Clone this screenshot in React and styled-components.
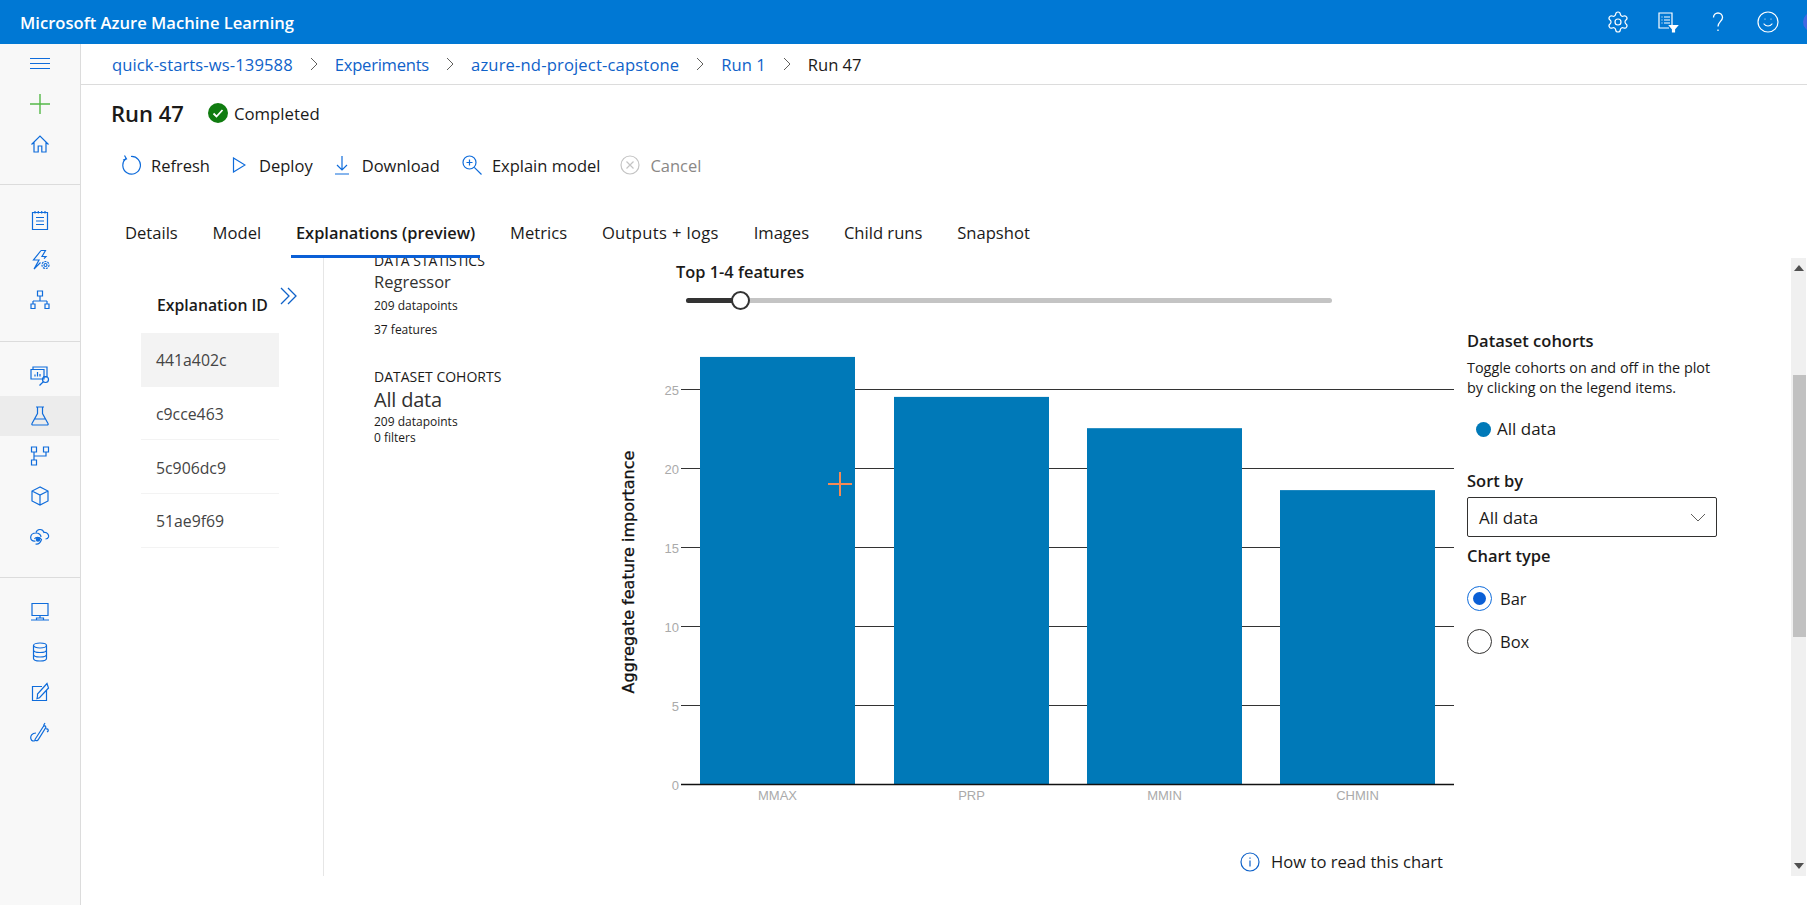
import React from "react";
import styled, { createGlobalStyle } from "styled-components";
import { Settings, Smile } from "lucide-react";

const GlobalStyle = createGlobalStyle`
  html, body {
    margin: 0;
    padding: 0;
    height: 100%;
    overflow: hidden;
    background: #fff;
    font-family: "Open Sans", "Noto Sans", sans-serif;
    color: #1b1a19;
  }
  * { box-sizing: border-box; }
`;

const Page = styled.div`
  display: flex;
  flex-direction: column;
  height: 905px;
`;

/* top bar */
const TopBar = styled.header`
  flex: 0 0 44px;
  display: flex;
  align-items: center;
  background: #0078d4;
  color: #fff;
  padding-left: 20px;
  overflow: hidden;
`;

const Brand = styled.div`
  flex: 1;
  min-width: 0;
  font-size: 16.6px;
  font-weight: 600;
`;

const TopIcons = styled.div`
  flex-shrink: 0;
  display: flex;
  align-items: center;
  gap: 26px;
  margin-right: -16px;
`;

const Avatar = styled.div`
  width: 20px;
  height: 20px;
  margin-left: -3px;
  border-radius: 50%;
  background: #4169e1;
`;

const Body = styled.div`
  flex: 1;
  display: flex;
  min-height: 0;
`;

/* left rail */
const Rail = styled.nav`
  flex: 0 0 81px;
  background: #f8f8f8;
  border-right: 1px solid #dcdcdc;
`;

const RailGroup = styled.div`
  padding: ${(p) => p.$top}px 0 ${(p) => p.$bottom}px;
  border-bottom: ${(p) => (p.$last ? "none" : "1px solid #dcdcdc")};
`;

const RailItem = styled.div`
  height: 40px;
  display: flex;
  align-items: center;
  justify-content: center;
  color: ${(p) => p.$color || "#0f6cdb"};
  background: ${(p) => (p.$active ? "#ececec" : "transparent")};
`;

/* main column */
const Main = styled.main`
  flex: 1;
  min-width: 0;
  display: flex;
  flex-direction: column;
`;

const Breadcrumb = styled.div`
  flex: 0 0 41px;
  display: flex;
  align-items: center;
  gap: 17px;
  padding-left: 31px;
  border-bottom: 1px solid #dcdcdc;
  font-size: 16.6px;
`;

const Crumb = styled.span`
  color: ${(p) => (p.$current ? "#1b1a19" : "#0f62c9")};
  letter-spacing: ${(p) => p.$track || 0}px;
`;

const TitleRow = styled.div`
  flex: 0 0 56px;
  display: flex;
  align-items: center;
  padding-left: 30px;
`;

const RunTitle = styled.h1`
  margin: 0 24px 0 0;
  font-size: 22px;
  font-weight: 600;
`;

const Status = styled.div`
  display: flex;
  align-items: center;
  gap: 6px;
  font-size: 16.8px;
`;

const Toolbar = styled.div`
  flex: 0 0 48px;
  display: flex;
  align-items: center;
  gap: 22px;
  padding-left: 40px;
`;

const ToolButton = styled.div`
  display: flex;
  align-items: center;
  gap: ${(p) => p.$gap || 11}px;
  margin-left: ${(p) => p.$shift || 0}px;
  font-size: 16.5px;
  color: ${(p) => (p.$disabled ? "#8a8886" : "#1b1a19")};
`;

const ToolIcon = styled.span`
  display: flex;
  color: ${(p) => (p.$muted ? "#c4c4c4" : "#0f6cdb")};
`;

const Tabs = styled.div`
  flex: 0 0 69px;
  display: flex;
  align-items: stretch;
  gap: 24.8px;
  padding: 29px 0 0 39px;
`;

const Tab = styled.div`
  display: flex;
  align-items: center;
  padding: 0 5px 8px;
  font-size: ${(p) => (p.$active ? 16.4 : 16.6)}px;
  letter-spacing: ${(p) => p.$track || 0}px;
  font-weight: ${(p) => (p.$active ? 600 : 400)};
  border-bottom: 3px solid ${(p) => (p.$active ? "#0a5fd6" : "transparent")};
`;

const Content = styled.section`
  flex: 0 0 618px;
  display: flex;
  overflow: hidden;
`;

/* explanation list */
const ListPane = styled.div`
  flex: 0 0 243px;
  padding-left: 60px;
  border-right: 1px solid #e6e6e6;
`;

const ListHeader = styled.div`
  height: 75px;
  display: flex;
  align-items: flex-start;
  font-size: 15.8px;
  font-weight: 600;
`;

const ListTitle = styled.span`
  margin: 36px 0 0 16px;
  width: 123px;
  white-space: nowrap;
`;

const Expander = styled.span`
  margin-top: 29px;
  color: #0f62c9;
`;

const ListRow = styled.div`
  width: 138px;
  height: 53.7px;
  display: flex;
  align-items: center;
  padding: 2px 0 0 15px;
  font-size: 15.8px;
  color: #444;
  background: ${(p) => (p.$active ? "#f3f3f3" : "transparent")};
  border-bottom: 1px solid #f3f3f3;
`;

/* stats column */
const StatsPane = styled.div`
  flex: 0 0 286px;
  padding: 0 0 0 50px;
  margin-top: -6px;
`;

const StatsLabel = styled.div`
  font-size: 14px;
  line-height: 18px;
  margin-top: ${(p) => p.$top || 0}px;
`;

const StatsValue = styled.div`
  font-size: ${(p) => p.$size}px;
  line-height: ${(p) => p.$line}px;
  letter-spacing: ${(p) => p.$track || 0}px;
  color: #323130;
`;

const StatsSmall = styled.div`
  font-size: 12px;
  line-height: ${(p) => p.$line}px;
`;

/* chart column */
const ChartPane = styled.div`
  flex: 0 0 858px;
  display: flex;
  flex-direction: column;
`;

const SliderTitle = styled.div`
  margin: 4px 0 0 66px;
  font-size: 16.4px;
  line-height: 20px;
  font-weight: 600;
`;

const SliderTrack = styled.div`
  position: relative;
  width: 646px;
  height: 5px;
  margin: 16px 0 0 76px;
  border-radius: 3px;
  background: #c4c4c4;
`;

const SliderFill = styled.div`
  height: 100%;
  border-radius: 3px;
  background: #333;
`;

const SliderThumb = styled.div`
  position: absolute;
  top: -7px;
  width: 19px;
  height: 19px;
  margin-left: -9px;
  border-radius: 50%;
  background: #fff;
  border: 2px solid #333;
`;

const ChartSvg = styled.svg`
  display: block;
  margin-top: 37px;
`;

const HowTo = styled.div`
  display: flex;
  align-items: center;
  justify-content: flex-end;
  gap: 11px;
  margin: 40px 25px 0 0;
  font-size: 16.6px;
  color: #0f62c9;
`;

const HowToText = styled.span`
  color: #1b1a19;
`;

/* right options */
const OptionsPane = styled.div`
  flex: 0 0 324px;
  padding-top: 72px;
  margin-left: -1px;
`;

const OptionHeading = styled.div`
  font-size: 16.5px;
  line-height: 22px;
  font-weight: 600;
`;

const OptionHint = styled.div`
  width: 260px;
  margin-top: 6px;
  font-size: 14.4px;
  line-height: 20px;
`;

const LegendItem = styled.div`
  display: flex;
  align-items: center;
  gap: 6px;
  margin: 20px 0 30px 9px;
  font-size: 17px;
  line-height: 22px;
`;

const LegendDot = styled.span`
  width: 15px;
  height: 15px;
  border-radius: 50%;
  background: #0079b8;
`;

const Select = styled.div`
  width: 250px;
  height: 40px;
  display: flex;
  align-items: center;
  justify-content: space-between;
  margin: 5px 0 8px 0;
  padding: 0 10px 0 11px;
  border: 1px solid #323130;
  border-radius: 2px;
  font-size: 17px;
  color: #605e5c;
`;

const SelectValue = styled.span`
  color: #1b1a19;
`;

const RadioRow = styled.div`
  display: flex;
  align-items: center;
  gap: 8px;
  height: 25px;
  margin-top: ${(p) => p.$top}px;
  font-size: 16.5px;
`;

const RadioMark = styled.span`
  width: 25px;
  height: 25px;
  display: flex;
  align-items: center;
  justify-content: center;
  border-radius: 50%;
  border: 1px solid ${(p) => (p.$on ? "#0f6cdb" : "#323130")};
  &::after {
    content: "";
    width: 13px;
    height: 13px;
    border-radius: 50%;
    background: ${(p) => (p.$on ? "#0a5fd6" : "transparent")};
  }
`;

/* fake scrollbar, part of the screenshot */
const ScrollBar = styled.div`
  flex: 0 0 15px;
  display: flex;
  flex-direction: column;
  justify-content: space-between;
  align-items: center;
  position: relative;
  background: #f0f0f0;
  padding: 7px 0;
`;

const ScrollArrow = styled.span`
  width: 0;
  height: 0;
  border-left: 5px solid transparent;
  border-right: 5px solid transparent;
  ${(p) => (p.$down ? "border-top: 6px solid #505050;" : "border-bottom: 6px solid #505050;")}
`;

const ScrollThumb = styled.div`
  position: absolute;
  top: 117px;
  left: 2px;
  right: 0;
  height: 262px;
  background: #c1c1c1;
`;

/* drawings */
const Glyph = ({ size = 20, w = 1.2, children, ...rest }) => (
  <svg width={size} height={size} viewBox="0 0 20 20" fill="none" stroke="currentColor" strokeWidth={w} {...rest}>
    {children}
  </svg>
);

const railIcons = {
  menu: <path d="M0 4.5h20M0 9.5h20M0 14.5h20" />,
  plus: <path d="M10 0v20M0 10h20" strokeWidth="1.4" />,
  home: <path d="M1.5 10.5 10 2l8.5 8.5M4 8.5v9.5h4.2v-6h3.6v6H16V8.500" />,
  notebook: <path d="M2.500 2.500h15v17h-15zM5 1v2.500M8.300 1v2.500M11.700 1v2.500M15 1v2.500M6 7.500h8M6 11h8M6 14.500h8" />,
  automl: (
    <>
      <path d="M11 .5 3.500 10H9l-5 9 6.500-6.500" />
      <path d="M11 .5h4.500L12 6.500h4l-2 2.200" />
      <circle cx="15.500" cy="15" r="1.500" />
      <circle cx="15.500" cy="15" r="3.500" strokeDasharray="2 1" />
    </>
  ),
  designer: <path d="M7.500 1h5v5h-5zM10 6v5M3 11h14M3 11v3M17 11v3M1 14h4v4.500H1zM15 14h4v4.500h-4z" />,
  dashboard: (
    <>
      <path d="M3 3.500V1h14v10h-4M1 3.500h13v9.500H1z" />
      <path d="M5 10.500V8.500M7.500 10.500V6M10 10.500V8" />
      <circle cx="15.500" cy="13.500" r="3" />
      <path d="M13.300 15.800 9.500 19.500" />
    </>
  ),
  flask: <path d="M6 1h8M7.500 1v6.500L2 17.500c-.5 1 0 1.500 1 1.500h14c1 0 1.500-.5 1-1.500L12.500 7.500V1M5 13h10" />,
  pipeline: <path d="M1.500 1h5v5h-5zM13.500 1h5v5h-5zM1.500 14h5v5h-5zM4 6v8M16 6v4H4" />,
  cube: <path d="M10 1 2 5v10l8 4 8-4V5zM2 5l8 4 8-4M10 9v10" />,
  cloud: (
    <>
      <path d="M6 6.500C7 3 12.500 2 14 6.500c3.500-.5 5 2.500 4.500 4.500-.5 1.500-1.500 2-3 2M5.500 15c-3 .5-5-1-4.800-4C1 8.500 3 7 6 7c3 0 5 2 5 4" />
      <path d="M4.500 13c1-2 5-2.500 7 .5-1 3-3 5-6 4.500" />
      <circle cx="8" cy="13.500" r="1.600" fill="currentColor" />
    </>
  ),
  monitor: <path d="M2 1.500h16v12H2zM10 13.500v2.500M6.500 16h7v2h-7zM1 18h18" />,
  database: (
    <>
      <ellipse cx="10" cy="3.500" rx="6.500" ry="2.500" />
      <path d="M3.500 3.500v13c0 1.400 3 2.500 6.500 2.500s6.500-1.100 6.500-2.500v-13M3.500 8c0 1.400 3 2.500 6.500 2.500s6.500-1.100 6.500-2.500M3.500 12.500c0 1.400 3 2.500 6.500 2.500s6.500-1.100 6.500-2.500" />
    </>
  ),
  edit: <path d="M16.500 8v10.500h-14v-14H12M7.500 14l-.5 2.500 2.500-.8L18.500 6 17 1.500 7.500 12z" />,
  brush: <path d="M5 17.500 13 5c1-1.500 3-1.500 2.800.5L8 18c-1 1-3 1-3-.5zM13.500 3.500 15 1M16 7c2.500-.5 3 2 1 3M6 11c-4 0-6 3-5 6 .5 2 2.500 2.500 4 1.500" />,
};

const RailIcon = ({ name, size }) => <Glyph size={size}>{railIcons[name]}</Glyph>;

const railGroups = [
  { top: 0, bottom: 20, items: [{ icon: "menu" }, { icon: "plus", color: "#54b848" }, { icon: "home" }] },
  { top: 15, bottom: 21, items: [{ icon: "notebook" }, { icon: "automl" }, { icon: "designer" }] },
  {
    top: 14,
    bottom: 21,
    items: [{ icon: "dashboard" }, { icon: "flask", active: true }, { icon: "pipeline" }, { icon: "cube" }, { icon: "cloud" }],
  },
  { top: 14, bottom: 0, last: true, items: [{ icon: "monitor" }, { icon: "database" }, { icon: "edit" }, { icon: "brush" }] },
];

const ChevronRight = () => (
  <svg width="8" height="14" viewBox="0 0 8 14" fill="none" stroke="#605e5c" strokeWidth="1">
    <path d="M1 1l6 6-6 6" />
  </svg>
);

const crumbs = [
  { label: "quick-starts-ws-139588", track: 0.1 },
  { label: "Experiments", track: -0.25 },
  { label: "azure-nd-project-capstone", track: 0.15 },
  { label: "Run 1", track: 0 },
];
const tabs = [
  { label: "Details" },
  { label: "Model" },
  { label: "Explanations (preview)", active: true },
  { label: "Metrics" },
  { label: "Outputs + logs", track: 0.33 },
  { label: "Images" },
  { label: "Child runs" },
  { label: "Snapshot" },
];
const explanations = ["441a402c", "c9cce463", "5c906dc9", "51ae9f69"];

const bars = [
  { name: "MMAX", value: 27.03, x: 90 },
  { name: "PRP", value: 24.5, x: 284 },
  { name: "MMIN", value: 22.52, x: 477 },
  { name: "CHMIN", value: 18.6, x: 670 },
];
const BAR_W = 155;
const ZERO_Y = 444;
const UNIT = 15.8;
const ticks = [5, 10, 15, 20, 25];
const tickY = (t) => Math.round(ZERO_Y - t * UNIT) + 0.5;

function Chart() {
  return (
    <ChartSvg width="858" height="470" viewBox="0 0 858 470">
      <text
        transform={`translate(24 ${ZERO_Y - 212}) rotate(-90)`}
        textAnchor="middle"
        fontFamily="DejaVu Sans, sans-serif"
        fontSize="16"
        stroke="#111"
        strokeWidth="0.3"
        fill="#111"
      >
        Aggregate feature importance
      </text>
      {ticks.map((t) => (
        <line key={t} x1="71" x2="844" y1={tickY(t)} y2={tickY(t)} stroke="#333" />
      ))}
      {[0, ...ticks].map((t) => (
        <text key={t} x="69" y={tickY(t) + 5} textAnchor="end" fontFamily="Liberation Sans, sans-serif" fontSize="13" fill="#aaa">
          {t}
        </text>
      ))}
      {bars.map((b) => (
        <g key={b.name}>
          <rect x={b.x} y={ZERO_Y - b.value * UNIT} width={BAR_W} height={b.value * UNIT} fill="#0079b8" />
          <text x={b.x + BAR_W / 2} y={ZERO_Y + 16} textAnchor="middle" fontFamily="Liberation Sans, sans-serif" fontSize="13" fill="#aaa">
            {b.name}
          </text>
        </g>
      ))}
      <line x1="71" x2="844" y1={ZERO_Y + 0.5} y2={ZERO_Y + 0.5} stroke="#111" strokeWidth="1.4" />
      <path d="M218 144h24M230 132v24" stroke="#f58a55" strokeWidth="2" />
    </ChartSvg>
  );
}

export default function App() {
  return (
    <Page>
      <GlobalStyle />
      <TopBar>
        <Brand>Microsoft Azure Machine Learning</Brand>
        <TopIcons>
          <Settings size={24} strokeWidth={1.2} />
          <Glyph size={24} w={1.2} viewBox="-2 -2 24 24">
            <path d="M14 14V1H1v15h10M3.500 5h1M6 5h6M3.500 8h1M6 8h6M3.500 11h1M6 11h6" />
            <path d="M11.500 13.500h8l-3 3.500v3h-2v-3z" fill="#fff" />
          </Glyph>
          <Glyph size={24} w={1.3} viewBox="-2 -2 24 24">
            <path d="M5.500 5.500C5.500 3 7.500 1 10 1s4.500 2 4.500 4.500c0 3.500-4.500 4.500-4.500 9" />
            <path d="M10 17.500v1.500" />
          </Glyph>
          <Smile size={24} strokeWidth={1.2} />
          <Avatar />
        </TopIcons>
      </TopBar>

      <Body>
        <Rail>
          {railGroups.map((g, i) => (
            <RailGroup key={i} $top={g.top} $bottom={g.bottom} $last={g.last}>
              {g.items.map((it) => (
                <RailItem key={it.icon} $active={it.active} $color={it.color}>
                  <RailIcon name={it.icon} />
                </RailItem>
              ))}
            </RailGroup>
          ))}
        </Rail>

        <Main>
          <Breadcrumb>
            {crumbs.map((c) => (
              <React.Fragment key={c.label}>
                <Crumb $track={c.track}>{c.label}</Crumb>
                <ChevronRight />
              </React.Fragment>
            ))}
            <Crumb $current>Run 47</Crumb>
          </Breadcrumb>

          <TitleRow>
            <RunTitle>Run 47</RunTitle>
            <Status>
              <svg width="20" height="20" viewBox="0 0 20 20">
                <circle cx="10" cy="10" r="10" fill="#107c10" />
                <path d="M5.500 10.500l3 3 6-6.500" fill="none" stroke="#fff" strokeWidth="1.800" />
              </svg>
              Completed
            </Status>
          </TitleRow>

          <Toolbar>
            <ToolButton $gap={10}>
              <ToolIcon>
                <Glyph>
                  <path d="M5 3.500A8.800 8.800 0 1 0 10 1.500" />
                  <path d="M3.500 .5 5.500 4 2 5" />
                </Glyph>
              </ToolIcon>
              Refresh
            </ToolButton>
            <ToolButton $gap={13}>
              <ToolIcon>
                <Glyph size={14} viewBox="0 0 14 16" height={16}>
                  <path d="M1.500 1v14L13 8z" />
                </Glyph>
              </ToolIcon>
              Deploy
            </ToolButton>
            <ToolButton $gap={13}>
              <ToolIcon>
                <Glyph size={14} viewBox="0 0 14 20" height={20}>
                  <path d="M7 1v14M2 10l5 5 5-5M0 19h14" />
                </Glyph>
              </ToolIcon>
              Download
            </ToolButton>
            <ToolButton $gap={10}>
              <ToolIcon>
                <Glyph>
                  <circle cx="7.500" cy="7.500" r="6.500" />
                  <path d="M12.300 12.300 19.500 19.500M4.500 7.500h6M7.500 4.500v6" />
                </Glyph>
              </ToolIcon>
              Explain model
            </ToolButton>
            <ToolButton $gap={10} $shift={-2} $disabled>
              <ToolIcon $muted>
                <Glyph>
                  <circle cx="10" cy="10" r="9" />
                  <path d="M6.500 6.500l7 7M13.500 6.500l-7 7" />
                </Glyph>
              </ToolIcon>
              Cancel
            </ToolButton>
          </Toolbar>

          <Tabs>
            {tabs.map((t) => (
              <Tab key={t.label} $active={t.active} $track={t.track}>
                {t.label}
              </Tab>
            ))}
          </Tabs>

          <Content>
            <ListPane>
              <ListHeader>
                <ListTitle>Explanation ID</ListTitle>
                <Expander>
                  <svg width="18" height="18" viewBox="0 0 18 18" fill="none" stroke="currentColor" strokeWidth="1.300">
                    <path d="M1 1l8 8-8 8M8 1l8 8-8 8" />
                  </svg>
                </Expander>
              </ListHeader>
              {explanations.map((id, i) => (
                <ListRow key={id} $active={i === 0}>
                  {id}
                </ListRow>
              ))}
            </ListPane>

            <StatsPane>
              <StatsLabel>DATA STATISTICS</StatsLabel>
              <StatsValue $size={16.5} $line={24}>
                Regressor
              </StatsValue>
              <StatsSmall $line={24}>209 datapoints</StatsSmall>
              <StatsSmall $line={23}>37 features</StatsSmall>
              <StatsLabel $top={27}>DATASET COHORTS</StatsLabel>
              <StatsValue $size={20} $line={28} $track={-0.2}>
                All data
              </StatsValue>
              <StatsSmall $line={16}>209 datapoints</StatsSmall>
              <StatsSmall $line={16}>0 filters</StatsSmall>
            </StatsPane>

            <ChartPane>
              <SliderTitle>Top 1-4 features</SliderTitle>
              <SliderTrack>
                <SliderFill style={{ width: "54px" }} />
                <SliderThumb style={{ left: "54px" }} />
              </SliderTrack>
              <Chart />
              <HowTo>
                <Glyph>
                  <circle cx="10" cy="10" r="9" />
                  <path d="M10 8.500v6M10 5.500v1.200" />
                </Glyph>
                <HowToText>How to read this chart</HowToText>
              </HowTo>
            </ChartPane>

            <OptionsPane>
              <OptionHeading>Dataset cohorts</OptionHeading>
              <OptionHint>Toggle cohorts on and off in the plot by clicking on the legend items.</OptionHint>
              <LegendItem>
                <LegendDot />
                All data
              </LegendItem>
              <OptionHeading>Sort by</OptionHeading>
              <Select>
                <SelectValue>All data</SelectValue>
                <svg width="16" height="9" viewBox="0 0 16 9" fill="none" stroke="currentColor">
                  <path d="M1 1l7 7 7-7" />
                </svg>
              </Select>
              <OptionHeading>Chart type</OptionHeading>
              <RadioRow $top={19}>
                <RadioMark $on />
                Bar
              </RadioRow>
              <RadioRow $top={18}>
                <RadioMark />
                Box
              </RadioRow>
            </OptionsPane>

            <ScrollBar>
              <ScrollArrow />
              <ScrollThumb />
              <ScrollArrow $down />
            </ScrollBar>
          </Content>
        </Main>
      </Body>
    </Page>
  );
}
